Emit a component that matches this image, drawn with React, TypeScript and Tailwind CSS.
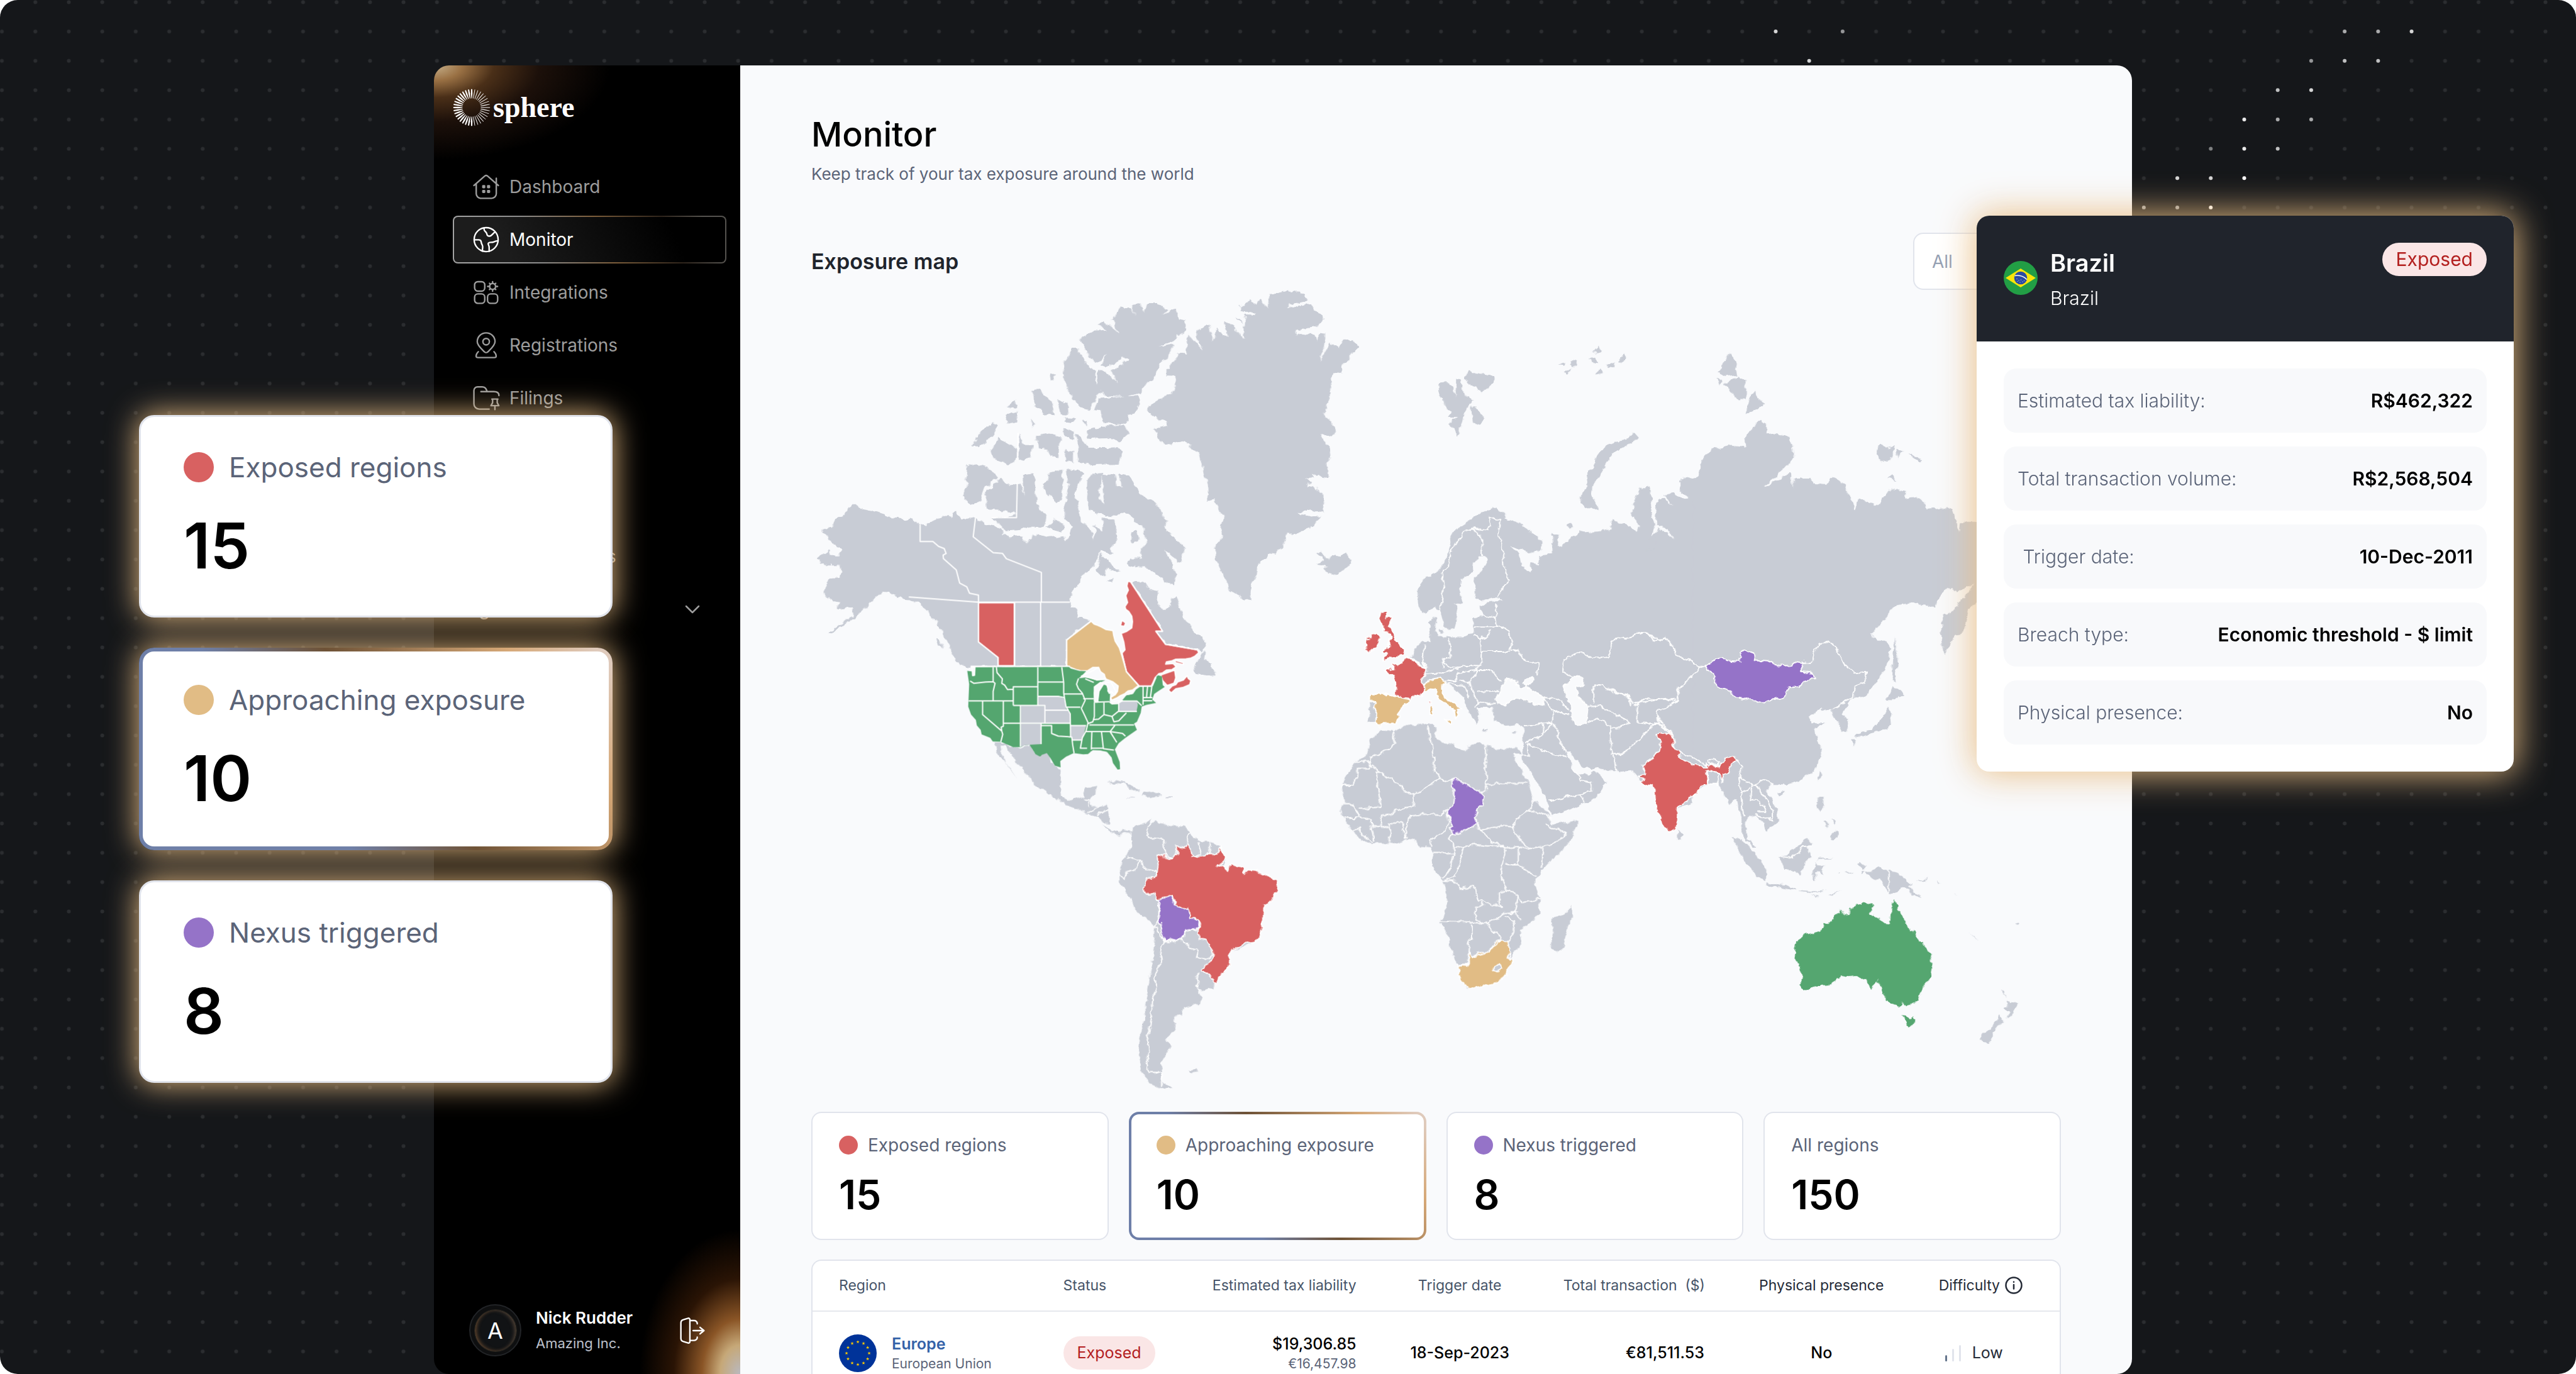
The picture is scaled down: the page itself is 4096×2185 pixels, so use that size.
import React from "react";
import clsx from "clsx";

/* ---------- types ---------- */

interface Stat {
  label: string;
  value: number;
  dot?: string;
  highlighted?: boolean;
}

interface Detail {
  label: string;
  value: string;
}

interface MapLayer {
  transform: string;
  land?: string;
  red?: string;
  sand?: string;
  green?: string;
  violet?: string;
  water?: string;
  holes?: string;
  borders?: string;
}

/* ---------- data ---------- */

const stats: Stat[] = [
  { label: "Exposed regions", value: 15, dot: "bg-[#d86161]" },
  {
    label: "Approaching exposure",
    value: 10,
    dot: "bg-[#e1bc85]",
    highlighted: true,
  },
  { label: "Nexus triggered", value: 8, dot: "bg-[#9573c8]" },
  { label: "All regions", value: 150 },
];

const details: Detail[] = [
  { label: "Estimated tax liability:", value: "R$462,322" },
  { label: "Total transaction volume:", value: "R$2,568,504" },
  { label: "\u00a0Trigger date:", value: "10-Dec-2011" },
  { label: "Breach type:", value: "Economic threshold - $ limit" },
  { label: "Physical presence:", value: "No" },
];

const northAmerica: MapLayer = {
  transform: "translate(1500 530) scale(.70153 .5102)",
  land:
    "M135 808L152 820 170 824 205 840 222 852 248 855 262 866 285 860 300 872 306 880 320 888 325 876 335 870 348 862 360 850 378 846 385 852 398 828 408 850 418 862 432 856 440 858 453 855 465 865 480 882 505 888 522 895 525 915 545 925 560 922 580 925 590 950 600 930 615 915 640 925 655 922 668 930 690 925 695 940 712 885 715 865 735 870 750 885 758 900 765 930 772 900 765 880 790 905 790 855 822 862 825 895 828 940 810 970 820 990 800 980 785 975 770 1030 755 1048 740 1060 730 1090 712 1120 704 1164 706 1180 718 1185 726 1222 740 1222 760 1232 695 1302 695 1398 440 1398 440 1404 420 1398 400 1375 392 1355 385 1325 370 1300 365 1270 350 1240 340 1215 320 1190 310 1170 285 1158 262 1155 240 1142 225 1130 205 1128 185 1150 178 1165 160 1185 150 1200 130 1222 105 1245 70 1280 62 1278 100 1240 128 1212 125 1185 100 1190 85 1186 90 1162 75 1158 60 1150 48 1130 52 1105 65 1078 90 1075 97 1055 92 1032 60 1032 45 1022 32 1002 50 988 65 975 68 990 92 990 98 970 80 958 72 945 60 920 48 912 48 898 72 890 80 862 105 848 118 820z" +
    // Labrador, Newfoundland
    "M865 1088L895 1090 915 1115 935 1125 938 1170 955 1193 970 1180 975 1155 982 1140 1010 1230 1030 1265 1060 1300 1065 1330 1050 1345 1042 1336 958 1316 934 1272 950 1270zM1055 1345L1065 1345 1062 1375 1080 1385 1078 1400 1090 1415 1088 1440 1070 1430 1030 1422 1035 1400z" +
    // Greenland
    "M1270 25L1300 25 1340 60 1285 78 1285 90 1345 75 1352 100 1372 110 1378 135 1362 155 1304 170 1304 190 1325 182 1350 185 1358 212 1368 182 1382 180 1382 210 1366 288 1395 218 1418 238 1432 202 1455 203 1470 232 1450 262 1445 282 1425 303 1428 328 1402 330 1395 350 1400 400 1385 440 1380 490 1395 500 1408 530 1405 552 1372 555 1385 590 1395 600 1398 640 1385 655 1390 710 1365 705 1345 695 1350 710 1328 715 1345 725 1332 745 1350 735 1375 770 1378 838 1340 825 1312 838 1330 850 1372 852 1340 895 1300 915 1280 910 1268 955 1250 990 1228 985 1225 1005 1205 1018 1200 1065 1190 1090 1185 1130 1180 1160 1160 1145 1150 1138 1130 1120 1115 1070 1105 1050 1090 1000 1088 960 1110 920 1105 880 1112 850 1100 830 1088 790 1070 795 1068 740 1060 690 1055 660 1042 620 1020 585 995 575 960 590 940 570 935 550 925 532 945 525 965 520 965 500 940 500 910 468 920 440 955 412 975 408 982 370 985 340 962 338 962 310 985 275 990 255 1012 260 1018 190 1035 208 1055 242 1038 185 1050 165 1075 155 1085 215 1092 160 1112 192 1122 190 1112 142 1140 160 1165 203 1165 150 1145 122 1158 130 1168 160 1170 115 1195 118 1195 108 1155 98 1155 85 1185 62 1200 78 1210 55 1225 88 1232 40z" +
    // Ellesmere, Axel Heiberg, Devon
    "M838 88L868 90 878 122 868 78 892 75 900 105 905 72 935 72 965 95 950 115 985 92 995 130 1012 135 1010 170 982 205 940 235 980 220 965 265 935 320 925 350 905 365 890 400 850 415 800 410 780 375 778 318 800 320 832 365 812 318 845 295 862 275 845 272 810 302 785 300 800 262 775 290 755 270 750 250 735 215 732 200 765 172 800 170 778 150 795 138 832 178 815 130zM708 235L722 235 745 290 770 320 775 365 792 385 772 420 768 435 758 465 735 460 710 415 695 375 685 330 690 285 700 262zM780 420L830 415 880 410 890 430 878 475 858 480 858 510 830 518 790 505 785 465 768 462zM745 540L800 520 850 520 858 550 835 578 808 565 755 568zM720 550L735 565 755 600 800 600 830 598 842 615 835 660 760 662 728 655zM688 530L715 540 715 570 690 560z" +
    // Queen Elizabeth islands
    "M465 545L500 505 512 520 495 560 475 590 445 590zM535 450L558 428 566 455zM530 480L565 468 562 505 540 512zM605 390L625 390 658 435 662 485 640 478 612 455zM672 425L698 440 700 480 680 478zM690 488L718 490 715 508 692 505zM492 612L518 562 545 590 565 610 565 640 535 665 500 635zM570 545L580 590 605 590 600 635 568 645zM615 555L650 548 678 560 675 638 652 635 645 605 620 600zM690 605L712 612 712 655 695 650zM652 330L665 335 664 360 654 355zM600 490L612 520 605 525zM738 495L750 500 745 520z" +
    // Banks, Victoria, Prince of Wales, Somerset
    "M428 668L455 660 488 672 513 712 480 740 465 795 443 808 418 775 430 730zM518 712L540 735 560 730 575 735 582 780 580 700 605 695 612 720 615 800 640 850 635 890 600 888 570 900 530 905 520 880 495 855 540 848 562 840 520 830 485 825 480 765zM650 690L680 680 685 720 685 780 668 800 640 760 632 730 648 715zM695 685L720 677 743 690 725 740 718 770 732 850 735 870 712 885 690 860 690 800 700 740z" +
    // Baffin and Hudson bay islands
    "M750 720L765 695 792 692 782 740 780 780 795 805 790 740 790 700 825 697 830 735 842 745 832 697 860 702 875 738 900 780 920 790 945 820 960 870 955 895 985 935 1012 965 1000 1010 988 1018 970 980 955 975 985 1050 980 1105 955 1090 930 1060 905 1035 880 1035 855 1025 865 1005 895 1005 890 980 908 940 895 880 870 860 845 835 830 850 790 845 758 830 748 790zM785 985L800 1010 820 1030 838 1052 820 1050 805 1040 795 1070 775 1050zM865 910L880 905 888 935 870 948zM805 1085L820 1075 815 1095zM640 890L665 860 690 890 680 905zM350 1290L360 1300 368 1335 355 1315z" +
    // Iceland
    "M1358 985L1375 980 1385 1005 1400 990 1420 995 1432 980 1450 1010 1442 1040 1405 1065 1378 1050 1385 1030 1360 1025 1380 1010z",
};

const canada: MapLayer = {
  transform: "translate(1500 530) scale(.70153 .5102)",
  red:
    "M461 1166H556V1396H513V1366L461 1309z" +
    "M858 1087L865 1090 950 1270 932 1270 958 1318 1042 1338 1046 1348 1035 1362 1025 1368 1012 1371 985 1372 975 1378 960 1382 958 1390 978 1388 986 1400 975 1410 960 1412 950 1422 940 1425 930 1440 925 1456 920 1470 888 1470 854 1418 842 1350 850 1338 847 1310 840 1278 855 1270 868 1258 870 1235 868 1215 860 1198 852 1190 850 1180 857 1165 852 1140 859 1120 855 1105z" +
    "M945 1430L982 1412 985 1440 980 1460 962 1468 950 1450zM965 1485L975 1470 985 1465 990 1455 1005 1448 1015 1432 1018 1442 1025 1450 1022 1465 1005 1475 985 1480 973 1495zM980 1375L1005 1385 1005 1392 985 1385zM842 1230L852 1240 848 1252 838 1250z",
  sand:
    "M760 1233L768 1244 775 1247 788 1255 800 1264 818 1268 820 1285 824 1306 835 1330 842 1360 854 1418 886 1468 870 1485 858 1488 850 1498 838 1505 828 1514 815 1522 812 1512 825 1500 830 1490 832 1470 818 1455 800 1445 794 1430 785 1418 778 1402 765 1402 750 1415 735 1415 720 1410 705 1402 695 1395 695 1302z",
};

const provinces: MapLayer = {
  transform: "translate(1500 530) scale(.70153 .5102)",
  borders:
    "M306 880V942H340L355 960 370 968 375 986 367 992 368 1005 402 1046 411 1094 430 1108 437 1131 461 1138V1309L513 1366V1396M276 1145L461 1164H704M453 855L447 925 500 983 525 986 535 1005 628 1055V1164M557 1164V1396M626 1164V1396M695 1398V1302L760 1233M440 1398H704M842 1350L854 1418 888 1471H920M865 1088L950 1270H932L958 1318 1042 1338 1050 1347M564 728L562 855H495M566 545L565 645",
};

const usa: MapLayer = {
  transform: "translate(1740 1060) scale(.35714 .33333)",
  green:
    "M175 575L210 580 215 555 705 553 715 562 760 575 795 577 770 605 755 618 790 612 812 618 850 628 895 628 870 640 840 660 835 700 838 745 848 755 858 750 862 690 880 650 910 660 905 690 920 705 918 740 920 750 950 745 985 738 1005 712 1040 705 1055 680 1075 665 1140 660 1160 610 1170 600 1190 605 1195 655 1205 665 1170 690 1150 705 1140 735 1160 755 1110 765 1085 775 1080 810 1060 860 1045 870 1060 905 1020 935 1000 950 965 980 945 1015 970 1085 972 1125 960 1128 935 1090 928 1060 905 1030 870 1020 830 1018 805 1040 780 1042 730 1035 690 1055 660 1080 662 1115 632 1105 610 1065 590 1035 565 1045 555 1055 530 1040 500 988 470 992 455 1002 415 1002 350 972 308 970 295 950 250 930 245 905 225 880 220 850 195 820 180 775 185 650z",
  land:
    "M968 745L1060 745 1065 765 1058 800 968 800zM545 720L650 720 680 730 692 793 580 793 580 768 545 768zM455 771H578V868H455zM581 796L700 796 712 815 712 868 581 868zM455 871L560 871 560 985 500 988 470 992 455 1000zM714 881L795 881 775 960 722 960 716 940z",
  water:
    "M770 605L800 590 830 575 860 555 870 580 890 595 895 620 850 626 812 612 790 608zM838 665L870 640 885 650 862 690 855 750 838 745zM895 640L925 640 950 690 945 710 925 690 915 700 905 660zM920 752L960 742 985 742 960 758 930 760zM990 712L1005 695 1040 688 1030 703zM200 555L215 555 213 600 203 602z",
  borders:
    "M190 632L210 645 270 638 310 636M310 555V636L320 645 310 690V742M182 743H415M255 743V820L355 912 360 930 350 972M363 743V885L352 890 355 912M363 868H712M327 555L330 585 358 620 355 645 370 655 385 680 415 678M415 769V664H541M415 769H580V868M543 555V769M543 638H675M545 718H650L680 725M580 795H700M668 555L678 640V700L690 775 712 815 714 945M680 705H775M692 778H765M452 769V1000M560 868V985M562 881H615V925L650 940 720 945 722 962H775M732 1035L725 990 722 962M714 881H795M755 618L745 650 755 675 775 700 790 740 770 785 790 830 805 865 795 910 775 950 765 1008H800M790 620L835 640M780 731H835M838 750V830L830 860 805 870M888 750V820L860 845 835 848M838 750L918 748M888 820L930 830 965 800V745M930 830L940 860 965 855 1005 810M812 878H1045M795 915H920L945 880M825 915L822 1015M875 915L885 1010 940 1018M825 1008H885M920 915L955 975M920 915L985 925 1000 940M966 802H1060M966 744H1060L1085 770M1092 665V765M1115 665L1110 725M1138 660L1130 725M1092 725H1140M1092 742H1140M1160 610L1140 660",
};

const centralAmerica: MapLayer = {
  transform: "translate(0 0)",
  land:
    "M1851 1385L1865 1385 1888 1394 1902 1394 1919 1390 1929 1407 1938 1412 1951 1406 1958 1415 1966 1429 1977 1435 1974 1460 1976 1485 1990 1495 2010 1490 2018 1486 2022 1469 2045 1466 2038 1484 2030 1492 2034 1505 2062 1504 2068 1536 2055 1534 2042 1520 2025 1516 2011 1510 1990 1503 1960 1485 1925 1460 1893 1420 1876 1393 1864 1392 1874 1423 1897 1453 1883 1433 1863 1410z",
};

const southAmericaAfrica: MapLayer = {
  transform: "translate(2000 1380) scale(.63776 .43367)",
  land:
    "M85 360L110 390 135 400 150 385 168 400 165 410 150 395 135 412 105 395zM98 182L125 173 160 190 195 215 170 215 150 190zM205 228L235 222 258 240 225 248 200 240zM160 248H178V251H160zM274 244H290V249H274z" +
    "M228 345L215 380 240 352 280 368 325 375 340 400 355 425 375 440 410 440 425 460 432 465 445 502 430 560 592 602 588 668 557 712 532 868 460 910 440 995 412 1050 405 1070 375 1075 360 1060 375 1105 368 1135 320 1148 320 1185 295 1190 295 1240 270 1295 285 1325 265 1370 255 1390 258 1430 255 1460 290 1500 255 1500 225 1480 200 1440 190 1350 195 1280 205 1200 215 1100 228 980 235 900 240 798 185 740 160 670 135 610 135 580 140 515 158 500 170 460 168 400 180 370 205 360z" +
    "M335 1422L360 1412 365 1425 345 1430z" +
    "M894 -41L935 -35 970 -60 1026 -67 1050 -70 1064 -45 1057 -16 1071 6 1110 21 1145 50 1157 28 1180 9 1207 24 1236 43 1299 36 1308 60 1283 60 1300 110 1325 170 1345 260 1385 310 1390 345 1400 365 1470 348 1468 385 1440 460 1400 510 1370 560 1352 600 1352 640 1362 685 1363 750 1320 800 1305 825 1310 890 1285 910 1283 960 1250 1030 1215 1055 1150 1070 1138 1040 1123 965 1110 930 1100 860 1075 790 1092 690 1088 640 1078 600 1048 545 1050 495 1045 460 1015 455 990 425 935 450 900 440 875 455 845 430 820 400 800 360 785 330 782 300 790 270 785 200 800 150 822 97 855 70 865 5z" +
    "M1452 710L1462 755 1450 780 1430 900 1412 912 1397 895 1398 850 1405 820 1400 765 1440 745z",
  red:
    "M245 498L262 497 275 510 290 512 305 488 302 462 325 465 342 448 348 490 360 505 388 490 415 490 432 463 445 502 422 545 435 540 452 562 460 535 498 550 498 572 515 560 548 568 592 602 598 640 588 668 570 705 557 712 555 790 545 840 532 868 500 875 460 910 458 960 440 995 415 1050 412 1032 375 990 408 940 402 890 385 860 366 856 370 790 360 768 342 768 338 728 298 708 290 668 258 685 238 685 240 660 222 668 206 635 215 600 243 588 248 540z",
  violet:
    "M250 688L288 668 293 705 338 728 343 768 360 770 368 800 362 818 328 820 318 855 300 862 285 856 268 868 258 825 250 770zM1106 175L1115 168 1197 228 1197 285 1185 290 1175 325 1183 358 1150 388 1113 410 1098 378 1112 375 1092 305 1110 270 1113 215z",
  sand:
    "M1155 905L1165 935 1187 912 1212 912 1232 870 1250 860 1272 865 1278 935 1285 938 1280 965 1255 1025 1228 1052 1200 1058 1155 1070 1137 1040 1123 965 1150 970 1157 960z",
  holes: "M1228 985L1242 965 1252 980 1240 1000zM1265 930L1275 918 1277 942z",
  borders:
    "M215 380L220 415 265 430 268 495 245 500M158 507L190 520 215 555 240 560 243 585M190 525L180 560 155 570 150 595 135 582M240 685L255 700 248 780 240 798 250 830 268 870 260 895 255 960 240 1010 242 1080 232 1110 228 1200 218 1290 222 1340 215 1390 220 1428 258 1430V1495M340 400L330 430 342 450M345 505L370 490 365 440M385 488L400 490V440M268 495L290 512M302 462L300 458M268 868L300 862 320 860 340 890 365 905 360 940 390 945 405 930M360 1060L365 995M320 860L325 820 360 815" +
    "M28 255H45V290M45 310L75 285M70 325L100 300" +
    "M822 97H865V80L910 50 940 15 935 -35M865 105L990 235H995L1075 165 1055 140 1052 60 1045 0 1035 -60M865 97V123H830V165L820 170V200H782M905 140H885L898 290 832 295M995 235L993 290 955 298 900 330 895 368M1075 165L1095 178 1115 168M1197 228L1206 220V25M1206 188H1325M1092 300L1075 325 1020 320 985 325 975 360 970 430M785 275H815L835 330 870 345 875 372 925 375V358H962L968 430M925 375V445M835 335H790M870 372L880 440M820 400L835 375 845 410 875 445M1092 310L1100 350 1078 400 1045 430V455M1112 410L1100 420 1115 465 1112 490H1050M1115 490L1100 560 1080 595M1140 460L1130 520 1115 590 1080 605 1120 610 1130 640 1172 630 1180 690H1197V715H1175L1178 770 1195 790M1075 783L1140 785 1210 793 1260 745M1115 465L1140 460 1170 448 1220 455 1262 462V500L1250 545 1253 600 1265 645 1245 655V700L1255 720 1200 695M1262 465L1300 462 1340 465 1372 460 1370 545M1300 462V538H1260M1300 538L1350 590M1265 645L1300 670 1310 700 1362 685M1300 670L1290 735 1310 780M1260 745L1300 740M1260 760L1287 775 1285 825 1272 862M1165 795V855L1155 858V965H1123M1210 793L1250 860 1210 910 1165 935M1180 360L1190 390 1225 440 1262 462M1190 390L1250 370 1285 375 1290 400 1310 440 1340 465M1285 375L1300 330 1330 305 1345 260M1330 305L1375 320 1395 345M1380 365L1440 402 1395 455 1372 460",
};

const europe: MapLayer = {
  transform: "translate(2440 560) scale(.44643 .63776)",
  land:
    "M535 245L575 242 590 248 610 285 612 232 630 235 645 275 682 298 655 315 640 355 618 400 582 360 620 345 578 345 600 325 570 322 540 275zM645 235L665 208 700 215 768 225 765 245 720 272 700 260zM675 312L700 315 730 348 708 368 682 360z" +
    "M1355 387L1372 400 1355 415 1300 435 1265 448 1235 485 1205 520 1180 545 1178 575 1208 617 1165 608 1135 595 1125 578 1145 568 1160 532 1155 515 1185 490 1190 465 1230 430 1270 418 1330 405z" +
    "M1035 192L1062 183 1060 192zM1090 185L1110 176 1120 190 1095 198zM1060 212L1090 200 1075 220zM1165 175L1190 168 1208 185 1185 190zM1185 150L1210 133 1220 152 1195 155zM1240 190L1272 180 1270 195 1245 200zM1290 180L1315 158 1322 175 1300 185zM1190 220L1215 205 1225 215zM1078 660L1090 653 1100 662 1085 672z" +
    "M450 850L480 808 540 795 560 765 582 735 590 700 612 672 660 650 700 628 760 608 820 625 815 640 880 658 930 680 970 705 968 730 935 742 880 728 840 715 875 745 885 780 920 795 925 765 955 775 960 750 1015 745 1010 680 1048 690 1030 705 1050 722 1090 695 1130 680 1200 678 1255 672 1260 645 1330 660 1370 685 1378 665 1345 630 1348 600 1380 550 1425 548 1428 575 1420 600 1440 665 1400 735 1440 725 1455 668 1500 690 1520 705 1495 665 1445 660 1450 600 1468 580 1520 605 1480 575 1540 575 1600 590V1470L1535 1485 1530 1520 1500 1555 1460 1490 1440 1445 1435 1412 1395 1420 1370 1395 1340 1375 1280 1378 1245 1375 1195 1368 1150 1368 1110 1345 1085 1322 1070 1325 1100 1370 1115 1388 1165 1385 1188 1375 1240 1410 1215 1440 1175 1465 1010 1510 1000 1480 960 1420 915 1370 885 1340 890 1310 888 1290 895 1250 870 1242 820 1245 770 1230 765 1205 765 1190 700 1190 710 1215 700 1240 670 1210 640 1160 610 1140 572 1120 480 1125 465 1110 490 1075 420 1045 430 1035 445 1012 478 1000 510 1000 498 940 528 928 525 965 540 985 580 985 640 985 680 975 685 930 725 925 715 895 750 885 810 882 780 870 730 880 690 880 688 820 740 772 742 752 710 750 685 770 680 795 630 820 625 850 640 885 608 890 618 920 605 960 565 965 545 905 520 895 485 917 455 900z" +
    "M250 1175L280 1178 270 1205 270 1235 248 1238 252 1210zM540 962L555 965 550 975 540 970zM720 1258H745V1262H720zM845 1266L865 1260 862 1266z",
  red:
    "M300 912L328 910 318 928 347 930 330 955 350 970 355 990 370 1003 378 1012 398 1018 388 1040 345 1048 303 1052 325 1035 308 1028 332 1012 328 1000 342 985 332 975 308 968 312 955 298 942 292 930zM235 990L262 985 255 978 285 972 290 985 285 1018 240 1030 232 1022 245 1008z" +
    "M412 1045L445 1065 490 1075 478 1105 465 1110 478 1125 482 1150 465 1158 445 1155 420 1168 385 1165 355 1155 362 1125 350 1100 312 1085 325 1078 352 1082 352 1065 385 1062 400 1045zM503 1168L511 1170 508 1182 503 1178z",
  sand:
    "M248 1158L262 1152 320 1155 375 1162 420 1170 412 1178 385 1190 370 1212 375 1220 358 1240 310 1240 292 1250 272 1235 275 1205 270 1190 282 1178 248 1172zM480 1120L545 1105 570 1112 570 1120 552 1125 552 1140 575 1165 640 1195 615 1195 622 1212 610 1225 605 1200 575 1185 540 1170 525 1140 510 1138 482 1148zM560 1228L595 1228 592 1240zM500 1190H513L512 1212H500z",
  water:
    "M775 1165L820 1110 865 1115 875 1135 900 1130 985 1165 975 1185 930 1180 860 1165 810 1185 785 1180zM885 1118L930 1100 940 1112 900 1128zM1060 1130L1100 1105 1145 1105 1145 1125 1110 1130 1120 1160 1165 1190 1158 1240 1120 1242 1090 1220 1095 1190 1070 1160z",
  borders:
    "M545 905L560 850 552 800 580 780 590 740 640 680 680 668 720 700 722 750M680 668L745 675 755 640 795 640 790 690 805 720 810 780 832 820 780 868M780 890L778 930 782 955 820 960 848 1000 835 1022 870 1025 885 1050 955 1065 950 1100M725 925L778 930M685 955H782M755 965L740 990 715 985M680 980L715 988 720 1028H835M720 1028L718 1060 695 1085M582 990L590 1045 555 1052 580 1075 625 1078 645 1068 720 1070M555 1052L560 1080M480 1010L470 1060 490 1075M478 1095L560 1090 620 1080M620 1090L610 1115 575 1112M620 1090L700 1085 760 1085 800 1115M700 1085L670 1115H620M700 1148L785 1145M670 1115L680 1150 700 1180 690 1190M575 1120L620 1130H655L665 1165M700 1180H775" +
    "M985 1170L1015 1200V1235L895 1245M955 1155L1050 1175 1085 1200M1015 1200L1080 1215M1020 1235L1045 1290 1070 1325M975 1240L970 1275 900 1295M970 1275L1015 1235M910 1298L1000 1325 1070 1335M885 1330H915L910 1298M1000 1465L1130 1445 1180 1435V1410L1130 1405 1105 1370M1130 1445L1145 1470" +
    "M1158 1235L1200 1225 1258 1245 1255 1310 1270 1335 1285 1378M1258 1330L1310 1325 1400 1270 1440 1235 1510 1265M1258 1258L1340 1235M1165 1188L1210 1185 1250 1200 1340 1235M1187 1180V1132L1225 1125 1270 1148 1330 1155 1350 1180 1450 1170 1530 1165M1370 1185L1365 1235 1460 1240 1450 1215" +
    "M1095 1105L1055 1085 1060 1055 1120 1032 1180 1045 1250 1045 1265 995 1340 985 1400 970 1460 995 1490 985",
};

const asiaLand: MapLayer = {
  transform: "translate(3000 580) scale(.5102 .63776)",
  land:
    "M160 650L180 640 210 650 235 675 215 640 170 628 175 590 165 575 175 550 200 560 235 578 200 540 235 530 270 570 280 600 292 575 285 545 255 520 255 495 320 485 330 450 345 425 385 405 440 395 495 400 490 370 515 350 550 322 575 335 570 355 590 360 640 365 665 390 670 430 630 465 580 500 562 518 600 500 660 475 670 520 670 490 730 490 750 508 790 512 810 485 860 510 865 530 895 582 912 550 980 570 1005 540 1015 520 1080 530 1080 550 1130 545 1160 580 1215 575 1250 580 1260 605 1275 645 1280 620 1360 620 1360 845 1305 870 1290 940 1258 950 1220 1005 1208 940 1220 895 1260 870 1300 830 1330 797 1280 820 1225 812 1185 865 1110 855 1040 862 1000 910 950 945 975 965 1010 965 1025 990 1005 1050 960 1100 930 1130 885 1135 860 1160 845 1180 868 1195 870 1230 842 1235 840 1205 820 1190 805 1165 775 1170 780 1160 725 1185 740 1205 785 1205 745 1225 765 1270 775 1300 750 1340 705 1370 640 1385 590 1385 570 1405 610 1455 615 1490 570 1520 560 1495 535 1480 510 1475 490 1500 505 1545 540 1568 520 1568 480 1530 480 1480 460 1430 430 1445 405 1390 390 1370 355 1385 330 1395 250 1445 245 1500 215 1525 180 1480 155 1380 120 1390 105 1365V700z" +
    "M247 1515L265 1532 262 1545 250 1547zM1040 955L1045 990 1058 1035 1040 1050 1045 1085 1030 1080 1035 1000zM1030 1098L1075 1122 1040 1140 1010 1138zM1018 1158L1028 1180 1010 1225 960 1235 900 1248 895 1240 955 1225 1005 1180zM880 1255L900 1255 890 1275z" +
    "M440 122L468 155 460 190 420 195 393 180 415 150zM415 215L465 192 495 205 495 262 465 260zM495 305L510 250 530 237 545 255 565 275zM388 200L415 208 400 216zM972 410L990 390 1010 405 1035 398 1035 430 990 445zM1045 405L1070 412 1052 432zM1088 420L1140 435 1130 443zM1015 490L1030 480 1048 498zM770 1348L775 1355 760 1378 757 1365zM610 1412L635 1405 620 1420z",
};

const asia: MapLayer = {
  transform: "translate(3000 580) scale(.5102 .63776)",
  red:
    "M168 1240L200 1235 220 1230 235 1250 228 1270 255 1292 250 1305 290 1325 350 1335 352 1318 358 1330 400 1332 420 1308 450 1302 463 1315 440 1328 432 1350 415 1358 408 1380 402 1352 365 1345 350 1345 357 1382 330 1390 315 1410 290 1425 262 1445 248 1450 245 1490 238 1515 215 1526 200 1515 170 1455 158 1382 130 1395 110 1380 125 1372 103 1362 130 1352 115 1330 150 1312 180 1280 185 1262z",
  violet:
    "M346 1042L375 1022 405 1015 430 1025 475 1028 478 1000 490 995 525 1005 528 1020 575 1022 610 1038 660 1038 680 1025 708 1028 698 1055 730 1058 750 1075 715 1082 690 1100 650 1102 640 1125 620 1135 560 1145 520 1137 455 1132 440 1112 385 1095 380 1065z",
  holes:
    "M354 1345L368 1347 400 1350 390 1362 398 1384 360 1384zM362 1315L385 1313 400 1320 396 1328 366 1328z",
  borders:
    "M100 940L130 940 165 965 205 955 250 1010 330 1040 300 1070 285 1072 275 1095 250 1102 245 1140 130 1135 90 1155M330 1040L346 1042M708 1028L735 1030 755 980 795 968 825 980 850 1028 890 1060 938 1055 930 1085 895 1100 890 1130 810 1165M0 1108L70 1130 75 1155M250 1140L170 1172 185 1205 235 1250M250 1290L340 1320 352 1335M463 1315L485 1330 470 1360 490 1480M470 1360L520 1390 560 1370 600 1385M520 1385L510 1430H540L570 1465H540M530 1385L595 1460V1490L530 1475M470 1410L510 1400",
};

const oceania: MapLayer = {
  transform: "translate(3280 1480) scale(.35714)",
  land:
    "M-150 225L-95 250 0 350 35 400 32 455 -15 435 -85 350zM35 465L90 475 130 478 188 500 185 505 130 497 60 485 35 478zM95 330L135 325 160 300 200 275 240 235 270 262 245 280 265 335 245 345 240 370 205 422 175 405 120 402 105 360zM285 375L300 345 370 345 382 335 370 340 300 338 290 370 335 378 310 395 330 430 315 425 305 400 290 410 290 452 283 450 275 405zM500 375L520 365 548 378 530 392zM548 410L575 410 612 385 672 402 740 425 765 460 790 470 770 480 800 515 840 543 790 530 770 498 735 490 710 518 675 518 640 480 620 450 560 430zM810 460L850 455 880 435 855 462zM305 18L330 18 330 55 315 100 292 70zM368 215L398 190 408 215 388 245 370 235zM330 148L345 150 350 180 338 170zM372 130L386 135 388 160 378 155zM360 530L415 510 375 534zM275 527L300 535 290 538zM405 412L420 415 408 418zM445 410L480 412 482 416 445 414zM525 405L545 402 530 425zM205 505L290 512 340 508 290 518 205 510z" +
    "M1285 1080L1310 1095 1348 1090 1335 1115 1320 1135 1300 1172 1288 1170 1298 1140 1270 1125 1288 1112zM1245 1160L1270 1185 1215 1245 1205 1285 1185 1303 1142 1290 1165 1250 1210 1218zM1255 1030L1275 1040 1280 1062zM1092 730L1138 765 1120 755zM1335 678L1345 675 1350 683 1338 686zM922 455L942 475 930 470zM1010 525L1030 532 1020 530z",
  green:
    "M697 553L720 615 745 625 768 705 808 728 830 772 848 775 850 790 885 830 898 890 885 960 855 1000 835 1050 830 1085 800 1090 765 1110 742 1090 718 1110 680 1100 655 1085 652 1060 628 1010 612 970 600 1000 575 1022 552 975 500 950 455 955 400 968 370 985 355 1000 290 1003 255 1025 225 1025 203 1005 217 995 215 955 200 890 182 855 188 835 175 805 185 770 235 738 310 718 335 690 332 670 355 675 385 650 385 635 418 610 435 620 440 635 468 630 470 600 490 582 525 578 525 568 592 580 582 600 570 625 635 665 655 680 672 675 682 650 685 595zM740 1163L780 1172 802 1163 800 1195 778 1225 757 1205z",
  borders: "M672 402V518M95 328L150 335 200 320 215 278 265 275",
};

/* ---------- icons ---------- */

const NavIcon = ({ children }: { children?: React.ReactNode }) => (
  <svg
    viewBox="0 0 24 24"
    className="h-11 w-11 shrink-0"
    fill="none"
    stroke="currentColor"
    strokeWidth={1.3}
    strokeLinecap="round"
    strokeLinejoin="round"
    aria-hidden="true"
  >
    {children}
  </svg>
);

const navItems = [
  {
    label: "Dashboard",
    icon: (
      <NavIcon>
        <path d="M1.4 10.9 10.8 2.7a1.9 1.9 0 0 1 2.4 0l9.4 8.2M20.8 9.2V4.6M3.4 9.4V18a4 4 0 0 0 4 4h9.4a4 4 0 0 0 4-4V9.4" />
        <g fill="currentColor" stroke="none">
          <rect x="8.5" y="10.5" width="2.8" height="2.8" rx=".8" />
          <rect x="12.7" y="10.5" width="2.8" height="2.8" rx=".8" />
          <rect x="8.5" y="14.7" width="2.8" height="2.8" rx=".8" />
          <rect x="12.7" y="14.7" width="2.8" height="2.8" rx=".8" />
        </g>
      </NavIcon>
    ),
  },
  {
    label: "Monitor",
    active: true,
    icon: (
      <NavIcon>
        <circle cx="12" cy="12" r="10.4" />
        <path d="M1.8 12.2h3.7c1.6 0 2.2.9 2.3 2.3.1 1.6 1.4 2.3 1.2 4L8.7 22M10.2 2v1.2c0 1.8 2 1.8 2.3 3.6.2 1.6 1.2 2.4 2.6 2.2 2-.3 2.4-2.2 4.6-3.6M14.6 22.2V19c0-2-.8-2-.8-3.4 0-1.8 3-.8 4.6-1.5 1.3-.6 2-1 4-1" />
      </NavIcon>
    ),
  },
  {
    label: "Integrations",
    icon: (
      <NavIcon>
        <rect x="2" y="2.7" width="8.8" height="8.2" rx="2.8" />
        <rect x="2" y="13.3" width="8.8" height="8.2" rx="2.8" />
        <rect x="13.2" y="13.3" width="8.8" height="8.2" rx="2.8" />
        <circle cx="17.6" cy="6.8" r="2.6" />
        <path d="M17.6 4.2V2.700M17.6 9.400v1.500M20.2 6.800h1.700M15 6.800h-1.700M19.400 5l.9-.9M15.800 8.600l-.9.9M19.400 8.600l.9.9M15.800 5l-.9-.9" />
      </NavIcon>
    ),
  },
  {
    label: "Registrations",
    icon: (
      <NavIcon>
        <path d="M10.6 17.8C8.5 15.6 4.3 12.3 4.3 8.8a7.7 7.5 0 0 1 15.4 0c0 3.5-4.2 6.8-6.3 9a2 2 0 0 1-2.8 0zM5.2 17.6c-1 1-1.9 2.8-1.9 3.8 0 .9.8 1.3 1.6 1.3h14.2c.8 0 1.6-.4 1.6-1.3 0-1-.9-2.8-1.9-3.8" />
        <circle cx="12" cy="8.9" r="2.8" />
      </NavIcon>
    ),
  },
  {
    label: "Filings",
    icon: (
      <NavIcon>
        <path d="M14.6 21.6H6a4.6 4.6 0 0 1-4.6-4.6V5.5a3.2 3.2 0 0 1 3.2-3.2h4c2.6 0 3.4 1.4 4 3.4M7.5 6.4h11.2c3 0 4.4 1 4.4 3.4M17 12.9h5.2M17.6 13.1v2.9l-1.4 2.6H23L21.6 16v-2.9M19.6 18.8V22" />
      </NavIcon>
    ),
  },
];

// rays are heavy on the left half of the mark and thin on the right
const rays = Array.from({ length: 36 }, (_, i) => {
  const angle = (i * Math.PI) / 18;
  const cos = Math.cos(angle);
  const sin = Math.sin(angle);
  const outer = cos < 0.05 ? 1.4 : 0.6;
  const inner = 0.5;
  const point = (r: number, w: number) =>
    `${35 + cos * r - sin * w},${35 + sin * r + cos * w}`;
  return [
    point(17, inner),
    point(26, outer),
    point(34, outer * 0.8),
    point(34, -outer * 0.8),
    point(26, -outer),
    point(17, -inner),
  ].join(" ");
});

const SphereMark = () => (
  <svg viewBox="0 0 70 70" className="h-[60px] w-[60px]" fill="#fff" aria-hidden="true">
    {rays.map((points) => (
      <polygon key={points} points={points} />
    ))}
  </svg>
);

const star = (cx: number, cy: number, r: number) =>
  Array.from({ length: 10 }, (_, i) => {
    const radius = i % 2 ? r * 0.4 : r;
    const angle = (i * Math.PI) / 5 - Math.PI / 2;
    return `${cx + radius * Math.cos(angle)},${cy + radius * Math.sin(angle)}`;
  }).join(" ");

const EuropeFlag = () => (
  <svg viewBox="0 0 60 60" className="h-15 w-15 shrink-0" aria-hidden="true">
    <circle cx="30" cy="30" r="30" fill="#003399" />
    {Array.from({ length: 12 }, (_, i) => {
      const angle = (i * Math.PI) / 6;
      return (
        <polygon
          key={i}
          fill="#ffcc00"
          points={star(
            30 + 18 * Math.sin(angle),
            30 - 18 * Math.cos(angle),
            2.8
          )}
        />
      );
    })}
  </svg>
);

const BrazilFlag = () => (
  <svg viewBox="0 0 54 54" className="h-[54px] w-[54px] shrink-0" aria-hidden="true">
    <circle cx="27" cy="27" r="27" fill="#229e45" />
    <path d="M27 12 51 27 27 42 3 27z" fill="#f8e509" />
    <circle cx="27" cy="27" r="10.3" fill="#2b49a3" />
    <path d="M17.5 23.5c7-1.4 14 .6 19.3 6" fill="none" stroke="#ffffef" strokeWidth="1.7" />
    <g fill="#ffffef">
      <circle cx="21" cy="28.5" r=".6" />
      <circle cx="24" cy="31" r=".6" />
      <circle cx="27.5" cy="30" r=".6" />
      <circle cx="30" cy="33" r=".6" />
      <circle cx="26" cy="34" r=".6" />
      <circle cx="22" cy="32.5" r=".5" />
      <circle cx="32.5" cy="31.5" r=".5" />
    </g>
  </svg>
);

/* ---------- map ---------- */

const Layer = ({ layer }: { layer: MapLayer }) => (
  <g transform={layer.transform}>
    {layer.green && <path d={layer.green} fill="#54a66f" />}
    {layer.land && <path d={layer.land} fill="#c8ccd5" />}
    <g stroke="#fff" strokeWidth="2" strokeLinejoin="round">
      {layer.red && (
        <path d={layer.red} fill="#d86161" vectorEffect="non-scaling-stroke" />
      )}
      {layer.sand && (
        <path d={layer.sand} fill="#e1bc85" vectorEffect="non-scaling-stroke" />
      )}
      {layer.violet && (
        <path d={layer.violet} fill="#9573c8" vectorEffect="non-scaling-stroke" />
      )}
      {layer.holes && (
        <path d={layer.holes} fill="#c8ccd5" vectorEffect="non-scaling-stroke" />
      )}
      {layer.water && (
        <path d={layer.water} fill="#f9fafc" vectorEffect="non-scaling-stroke" />
      )}
      {layer.borders && (
        <path d={layer.borders} fill="none" vectorEffect="non-scaling-stroke" />
      )}
    </g>
  </g>
);

const ExposureMap = () => (
  <svg viewBox="1512 542 2328 1498" className="w-full" role="img" aria-label="Exposure map">
    <defs>
      {/* roughens the digitised coastlines */}
      <filter id="coast" x="0" y="0" width="100%" height="100%">
        <feTurbulence type="fractalNoise" baseFrequency=".07" numOctaves="3" seed="4" />
        <feDisplacementMap in="SourceGraphic" scale="11" xChannelSelector="R" yChannelSelector="G" />
      </filter>
    </defs>
    <g filter="url(#coast)">
      <Layer layer={northAmerica} />
      <Layer layer={centralAmerica} />
      <Layer layer={southAmericaAfrica} />
      <Layer layer={asiaLand} />
      <Layer layer={europe} />
      <Layer layer={asia} />
      <Layer layer={oceania} />
    </g>
    <Layer layer={canada} />
    <Layer layer={usa} />
    <Layer layer={provinces} />
  </svg>
);

/* ---------- cards ---------- */

const StatCard = ({ stat, large }: { stat: Stat; large?: boolean }) => (
  <div
    className={clsx(
      large
        ? "rounded-3xl shadow-[0_0_48px_2px_rgba(233,190,132,0.95)]"
        : "rounded-2xl",
      stat.highlighted
        ? "border-transparent [background:linear-gradient(#fff,#fff)_padding-box,linear-gradient(53deg,#6e7fa8_34%,#6e5236_54%,#d6a877_83%,#dfcabb_97%)_border-box]"
        : "border-[#e1e4ec] bg-white",
      large && stat.highlighted && "border-6 px-[65px] pt-[47px] pb-12",
      large && !stat.highlighted && "border-3 px-[68px] pt-[50px] pb-[51px]",
      !large && stat.highlighted && "border-4 px-10 pt-[29px] pb-7",
      !large && !stat.highlighted && "border-2 px-[42px] pt-[31px] pb-[30px]"
    )}
  >
    <div className={clsx("flex items-center", large ? "gap-6" : "gap-4")}>
      {stat.dot && (
        <span
          className={clsx(
            "shrink-0 rounded-full",
            stat.dot,
            large ? "h-12 w-12" : "h-[30px] w-[30px]"
          )}
        />
      )}
      <p
        className={clsx(
          "whitespace-nowrap text-[#5b6478]",
          large ? "text-[44px] leading-[60px]" : "text-[28px] leading-10"
        )}
      >
        {stat.label}
      </p>
    </div>
    <p
      className={clsx(
        "font-semibold text-black",
        large
          ? "mt-[35px] text-[100px] leading-[120px]"
          : "mt-[19px] text-[64px] leading-20"
      )}
    >
      {stat.value}
    </p>
  </div>
);

const StatusBadge = ({ large }: { large?: boolean }) => (
  <span
    className={clsx(
      "inline-block rounded-full bg-[#fae6e6] leading-[53px] text-[#b3201f]",
      large ? "px-[22px] text-[30px]" : "px-[22px] text-[25px]"
    )}
  >
    Exposed
  </span>
);

const RegionCard = () => (
  <section className="absolute top-[343px] right-[99px] w-[854px] rounded-[20px] bg-white shadow-[0_0_56px_4px_rgba(233,190,132,0.95)]">
    <header className="flex h-50 items-start rounded-t-[20px] bg-[#20242c] px-[43px] pt-[43px]">
      <div className="flex flex-1 items-center gap-5">
        <BrazilFlag />
        <div className="text-white">
          <h2 className="text-[38px] leading-[64px] font-semibold">Brazil</h2>
          <p className="text-[30px] leading-[48px] font-light">Brazil</p>
        </div>
      </div>
      <StatusBadge large />
    </header>
    <dl className="flex flex-col gap-[22px] px-[43px] py-[43px]">
      {details.map((detail) => (
        <div
          key={detail.label}
          className="flex h-[102px] items-center justify-between rounded-[20px] bg-[#f8f9fb] px-[22px] text-[30px]"
        >
          <dt className="font-light text-[#5b6478]">{detail.label}</dt>
          <dd className="font-semibold text-black">{detail.value}</dd>
        </div>
      ))}
    </dl>
  </section>
);

/* ---------- page parts ---------- */

// [column, row, opacity]
const litDots = [
  [53, 0, 0.8], [55, 0, 0.5], [54, 1, 0.8], [70, 0, 0.6], [71, 0, 0.6],
  [72, 0, 0.8], [69, 1, 0.5], [70, 1, 0.7], [71, 1, 0.7], [68, 2, 0.7],
  [69, 2, 0.8], [67, 3, 0.9], [68, 3, 0.6], [69, 3, 0.6], [67, 4, 0.9],
  [68, 4, 0.7], [66, 4, 0.4], [65, 5, 0.8], [66, 5, 0.8], [67, 5, 1],
  [64, 6, 0.6], [65, 6, 0.6], [66, 6, 1],
];

const Backdrop = () => (
  <svg
    viewBox="0 0 4800 2560"
    preserveAspectRatio="xMidYMin slice"
    className="absolute inset-0 h-full w-full"
    aria-hidden="true"
  >
    <defs>
      <pattern id="dots" width="62.35" height="54.65" patternUnits="userSpaceOnUse">
        <circle cx="4" cy="4" r="3.5" fill="#2b2d30" />
      </pattern>
    </defs>
    <rect width="4800" height="2560" fill="url(#dots)" />
    <g fill="#fff">
      {litDots.map(([col, row, opacity]) => (
        <circle
          key={`${col}-${row}`}
          cx={4 + col * 62.35}
          cy={58.6 + row * 54.65}
          r="3.5"
          fillOpacity={opacity}
        />
      ))}
    </g>
  </svg>
);

const Sidebar = () => (
  <aside className="flex w-[487px] shrink-0 flex-col bg-black [background-image:radial-gradient(ellipse_280px_150px_at_0_0,#c7b18c_0%,#9a7144_16%,#4a2f18_34%,#1c100a_60%,transparent_100%),radial-gradient(ellipse_160px_230px_at_100%_100%,#b9b9c0_0%,#c6a878_20%,#8a5526_38%,#2a1405_66%,transparent_100%)]">
    <div className="mt-[37px] ml-[30px] flex items-center gap-1">
      <SphereMark />
      <span className="font-['Liberation_Serif',serif] text-[46px] leading-[60px] font-bold text-white">
        sphere
      </span>
    </div>
    <nav className="mt-[58px] flex flex-col gap-2 pr-[22px] pl-[30px]">
      {navItems.map((item) => (
        <a
          key={item.label}
          href="#"
          className={clsx(
            "flex h-[76px] items-center gap-[15px] rounded-lg border-2 border-transparent pl-[29px] text-[28px]",
            item.active
              ? "text-white [background:linear-gradient(65deg,#1c1c1c_20%,#000_80%)_padding-box,linear-gradient(65deg,#a3a3a3_8%,#8d8d8d_30%,#7d5e3b_55%,#2e241b_78%,#55534f_92%)_border-box]"
              : "text-[#9d9d9d]"
          )}
        >
          {item.icon}
          {item.label}
        </a>
      ))}
      <a
        href="#"
        className="mt-[168px] flex h-[76px] items-center gap-[15px] border-2 border-transparent pl-[29px] text-[28px] text-[#9d9d9d]"
      >
        <NavIcon />
        Transactions
      </a>
      <button
        type="button"
        className="flex h-[76px] items-center justify-between pr-[42px] pl-2.5 text-[28px] text-[#9d9d9d]"
      >
        Organization
        <svg viewBox="0 0 24 14" className="w-6" fill="none" stroke="currentColor" strokeWidth="2.5" strokeLinecap="round" strokeLinejoin="round" aria-hidden="true">
          <path d="m2 2 10 10L22 2" />
        </svg>
      </button>
    </nav>
    <div className="mt-auto mb-[28px] flex items-center pr-[54px] pl-[56px]">
      <div className="flex h-[83px] w-[83px] items-center justify-center rounded-full border-2 border-[#222427] bg-[#0e0f10]">
        <div className="flex h-[68px] w-[68px] items-center justify-center rounded-full border border-[#26241f] bg-[#111315] text-[36px] text-white shadow-[inset_4px_-1px_6px_-2px_#6b4c31,inset_-4px_1px_6px_-2px_#5a4a3c]">
          A
        </div>
      </div>
      <div className="ml-[23px] flex-1">
        <p className="text-[26px] leading-10 font-semibold text-white">Nick Rudder</p>
        <p className="text-[22px] leading-10 text-[#bdc1cc]">Amazing Inc.</p>
      </div>
      <button type="button" aria-label="Log out" className="text-white">
        <NavIcon>
          <path d="M9.8 2.6v18.9c0 .9-.8 1.5-1.6 1.2l-4-1.2A2.900 2.900 0 0 1 2 18.800V5.200a2.900 2.900 0 0 1 2.200-2.700l4-1.200c.8-.3 1.600.3 1.600 1.300zM10 3.300h3.600a2.600 2.600 0 0 1 2.600 2.800M10 20.500h3.600a2.600 2.600 0 0 0 2.600-2.800M12.600 12h9.400M18.600 9.200l3.400 2.800-3.400 2.800" />
        </NavIcon>
      </button>
    </div>
  </aside>
);

const RegionTable = () => (
  <div className="mt-[31px] rounded-t-2xl border-2 border-b-0 border-[#e1e4ec] bg-white">
    <table className="w-full table-fixed text-[25px] text-black">
      <colgroup>
        <col className="w-[20.1%]" />
        <col className="w-[10.1%]" />
        <col className="w-[13.4%]" />
        <col className="w-[16.6%]" />
        <col className="w-[11.3%]" />
        <col className="w-[18.8%]" />
        <col />
      </colgroup>
      <thead>
        <tr className="h-20 border-b-2 border-[#e6e8ed] text-[23px] whitespace-nowrap text-[#475569] *:font-normal">
          <th className="pl-[42px] text-left">Region</th>
          <th className="text-left">Status</th>
          <th className="text-right">Estimated tax liability</th>
          <th className="text-center">Trigger date</th>
          <th className="text-right">Total transaction&nbsp; ($)</th>
          <th className="text-center text-[#252b37]">Physical presence</th>
          <th className="text-left text-[#252b37]">
            <span className="flex items-center gap-2">
              Difficulty
              <svg viewBox="0 0 28 28" className="h-7 w-7 shrink-0" fill="none" stroke="currentColor" strokeWidth="2.5" strokeLinecap="round" aria-hidden="true">
                <circle cx="14" cy="14" r="12.5" />
                <path d="M14 13v6.500M14 8.500v.2" />
              </svg>
            </span>
          </th>
        </tr>
      </thead>
      <tbody>
        <tr className="h-[133px]">
          <td className="pl-[42px]">
            <div className="flex items-center gap-6">
              <EuropeFlag />
              <div>
                <a href="#" className="block leading-[34px] font-semibold text-[#3462a8]">
                  Europe
                </a>
                <p className="text-[21px] leading-[30px] text-[#5b6478]">European Union</p>
              </div>
            </div>
          </td>
          <td>
            <StatusBadge />
          </td>
          <td className="text-right">
            <p className="leading-[34px] font-medium">$19,306.85</p>
            <p className="text-[21px] leading-[30px] text-[#5b6478]">€16,457.98</p>
          </td>
          <td className="text-center font-medium">18-Sep-2023</td>
          <td className="text-right font-medium">€81,511.53</td>
          <td className="text-center font-medium">No</td>
          <td>
            <div className="flex items-center gap-[18px] pl-2.5">
              <span className="flex h-[26px] items-end gap-2">
                <span className="h-2.5 w-[3px] rounded-full bg-[#64748b]" />
                <span className="h-5 w-[3px] rounded-full bg-[#e1e4ec]" />
                <span className="h-[26px] w-[3px] rounded-full bg-[#e1e4ec]" />
              </span>
              <span className="text-[#252b37]">Low</span>
            </div>
          </td>
        </tr>
      </tbody>
    </table>
  </div>
);

const Monitor = () => (
  <main className="min-w-0 flex-1 bg-[#f9fafc] px-[113px] pt-[78px]">
    <h1 className="text-[54px] leading-[64px] font-medium text-black">Monitor</h1>
    <p className="mt-[13px] text-[26px] leading-9 text-[#5b6478]">
      Keep track of your tax exposure around the world
    </p>
    <div className="mt-[75px] flex items-center justify-between">
      <h2 className="text-[34px] font-semibold text-[#20242c]">Exposure map</h2>
      <label>
        <span className="sr-only">Filter regions</span>
        <select className="h-[91px] w-[235px] appearance-none rounded-2xl border-2 border-[#e1e4ec] bg-white pl-[28px] text-[28px] text-[#94a0b4]">
          <option>All</option>
        </select>
      </label>
    </div>
    <ExposureMap />
    <div className="mt-[28px] grid grid-cols-4 gap-8">
      {stats.map((stat) => (
        <StatCard key={stat.label} stat={stat} />
      ))}
    </div>
    <RegionTable />
  </main>
);

export default function App() {
  return (
    <div className="relative h-screen w-full overflow-hidden rounded-[28px] bg-[#15171a] pt-[104px] pr-[706px] pl-[690px] font-[Inter,sans-serif]">
      <Backdrop />
      <div className="relative flex h-full overflow-hidden rounded-3xl">
        <Sidebar />
        <Monitor />
      </div>
      <div className="absolute top-[660px] left-[221px] flex w-[753px] flex-col gap-12">
        {stats.slice(0, 3).map((stat) => (
          <StatCard key={stat.label} stat={stat} large />
        ))}
      </div>
      <RegionCard />
    </div>
  );
}
